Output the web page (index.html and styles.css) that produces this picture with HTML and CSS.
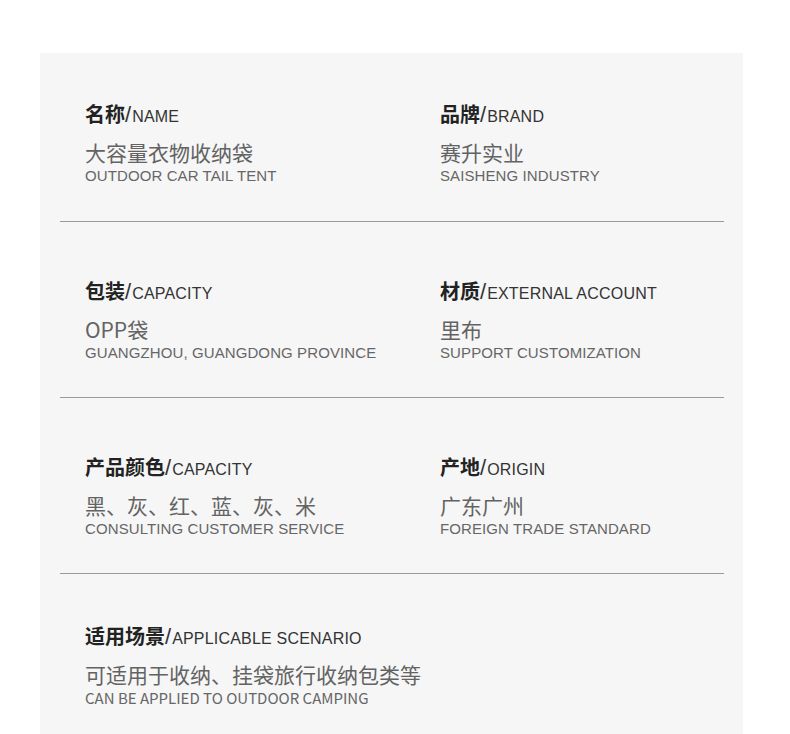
FILE: index.html
```html
<!DOCTYPE html>
<html lang="zh">
<head>
<meta charset="utf-8">
<title>产品参数</title>
<link rel="stylesheet" href="styles.css">
</head>
<body>
<div class="panel">
  <section class="row">
    <div class="cell">
      <div class="title"><span class="zh">名称</span><span class="slash">/</span><span class="en">NAME</span></div>
      <div class="value">大容量衣物收纳袋</div>
      <div class="sub">OUTDOOR CAR TAIL TENT</div>
    </div>
    <div class="cell">
      <div class="title"><span class="zh">品牌</span><span class="slash">/</span><span class="en">BRAND</span></div>
      <div class="value">赛升实业</div>
      <div class="sub">SAISHENG INDUSTRY</div>
    </div>
  </section>
  <hr class="divider">
  <section class="row">
    <div class="cell">
      <div class="title"><span class="zh">包装</span><span class="slash">/</span><span class="en">CAPACITY</span></div>
      <div class="value">OPP袋</div>
      <div class="sub">GUANGZHOU, GUANGDONG PROVINCE</div>
    </div>
    <div class="cell">
      <div class="title"><span class="zh">材质</span><span class="slash">/</span><span class="en">EXTERNAL ACCOUNT</span></div>
      <div class="value">里布</div>
      <div class="sub">SUPPORT CUSTOMIZATION</div>
    </div>
  </section>
  <hr class="divider">
  <section class="row">
    <div class="cell">
      <div class="title"><span class="zh">产品颜色</span><span class="slash">/</span><span class="en">CAPACITY</span></div>
      <div class="value">黑、灰、红、蓝、灰、米</div>
      <div class="sub">CONSULTING CUSTOMER SERVICE</div>
    </div>
    <div class="cell">
      <div class="title"><span class="zh">产地</span><span class="slash">/</span><span class="en">ORIGIN</span></div>
      <div class="value">广东广州</div>
      <div class="sub">FOREIGN TRADE STANDARD</div>
    </div>
  </section>
  <hr class="divider">
  <section class="row row-last">
    <div class="cell">
      <div class="title"><span class="zh">适用场景</span><span class="slash">/</span><span class="en">APPLICABLE SCENARIO</span></div>
      <div class="value">可适用于收纳、挂袋旅行收纳包类等</div>
      <div class="sub sub-cjk">CAN BE APPLIED TO OUTDOOR CAMPING</div>
    </div>
  </section>
</div>
</body>
</html>
```
FILE: styles.css
```css
html, body {
  margin: 0;
  padding: 0;
  background: #ffffff;
}
body {
  padding: 53px 0 0 40px;
  font-family: "Liberation Sans", "Noto Sans CJK SC", sans-serif;
}
.panel {
  width: 703px;
  background: #f6f6f6;
  padding: 49px 0 60px;
}
.row {
  display: grid;
  grid-template-columns: 355px 1fr;
  padding: 0 0 35px 45px;
}
.row + .divider + .row {
  padding-top: 57px;
  padding-bottom: 34px;
}
.row-last {
  grid-template-columns: 1fr;
}
.divider + .row-last.row {
  padding-top: 50px;
}
.divider {
  margin: 0 19px 0 20px;
  border: 0;
  height: 1px;
  background: #9a9a9a;
}
.title {
  height: 24px;
  line-height: 24px;
  white-space: nowrap;
  color: #222;
}
.title .zh {
  font-family: "Noto Sans CJK SC", sans-serif;
  font-weight: 700;
  font-size: 20px;
}
.title .slash {
  font-family: "Liberation Sans", sans-serif;
  font-size: 22px;
  color: #333;
  margin: 0 1px 0 0;
}
.title .en {
  font-family: "Liberation Sans", sans-serif;
  font-size: 16px;
  letter-spacing: 0.2px;
  color: #333;
}
.value {
  margin-top: 12px;
  height: 28px;
  line-height: 28px;
  font-family: "Noto Sans CJK SC", sans-serif;
  font-size: 21px;
  color: #636363;
  white-space: nowrap;
}
.sub {
  height: 20px;
  line-height: 20px;
  font-family: "Liberation Sans", sans-serif;
  font-size: 15px;
  letter-spacing: 0.1px;
  color: #666;
  white-space: nowrap;
}
.sub-cjk {
  font-family: "Noto Sans CJK SC", sans-serif;
  font-size: 15px;
  letter-spacing: 0;
}
```
